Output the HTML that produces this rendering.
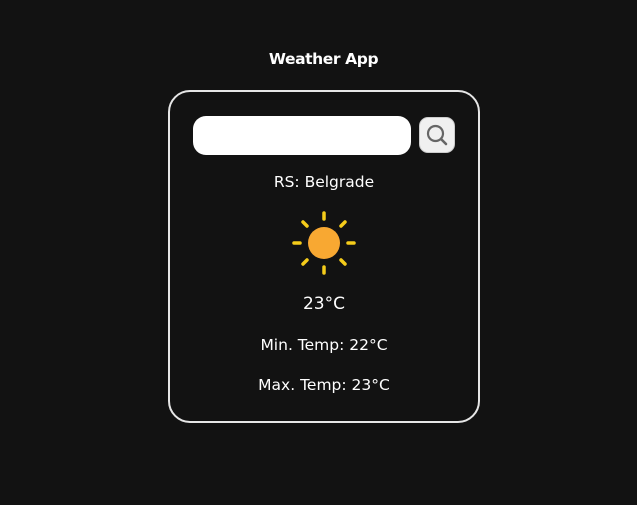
<!DOCTYPE html>
<html><head><style>
html,body{margin:0;padding:0;background:#121212;width:637px;height:505px;overflow:hidden;font-family:"DejaVu Sans",sans-serif;color:#fff}
.t{position:absolute;left:0;width:647px;top:50px;text-align:center;font-weight:bold;font-size:15.5px;letter-spacing:-0.4px}
.card{position:absolute;left:168px;top:90px;width:308px;height:329px;border:2px solid #e6e6e6;border-radius:22px}
.inp{position:absolute;left:193px;top:116px;width:218px;height:39px;background:#fff;border-radius:13px}
.btn{position:absolute;left:419px;top:117px;width:34px;height:34px;background:#f0f0f0;border:1px solid #ccc;border-radius:9px}
.tx{position:absolute;left:168px;width:312px;text-align:center;font-size:15.5px}
</style></head><body>
<div class="t">Weather App</div>
<div class="card"></div>
<div class="inp"></div>
<div class="btn"><svg width="34" height="34" viewBox="0 0 34 34"><circle cx="15.5" cy="15.5" r="7.5" fill="none" stroke="#666" stroke-width="2.2"/><line x1="21" y1="21" x2="26" y2="26" stroke="#666" stroke-width="2.6" stroke-linecap="round"/></svg></div>
<div class="tx" style="top:173px">RS: Belgrade</div>
<svg style="position:absolute;left:290px;top:209px" width="68" height="68" viewBox="0 0 68 68">
<g stroke="#f5cc1a" stroke-width="3.5" stroke-linecap="round">
<line x1="34" y1="4" x2="34" y2="10"/><line x1="34" y1="58" x2="34" y2="64"/>
<line x1="4" y1="34" x2="10" y2="34"/><line x1="58" y1="34" x2="64" y2="34"/>
<line x1="13" y1="13" x2="17" y2="17"/><line x1="51" y1="51" x2="55" y2="55"/>
<line x1="55" y1="13" x2="51" y2="17"/><line x1="13" y1="55" x2="17" y2="51"/>
</g>
<circle cx="34" cy="34" r="16" fill="#f8a832"/>
<path d="M44 22 A16 16 0 0 1 30 49.5 A16 16 0 0 0 44 22Z" fill="#f0982a"/>
</svg>
<div class="tx" style="top:294px;font-size:17px">23°C</div>
<div class="tx" style="top:336px">Min. Temp: 22°C</div>
<div class="tx" style="top:376px">Max. Temp: 23°C</div>
</body></html>
